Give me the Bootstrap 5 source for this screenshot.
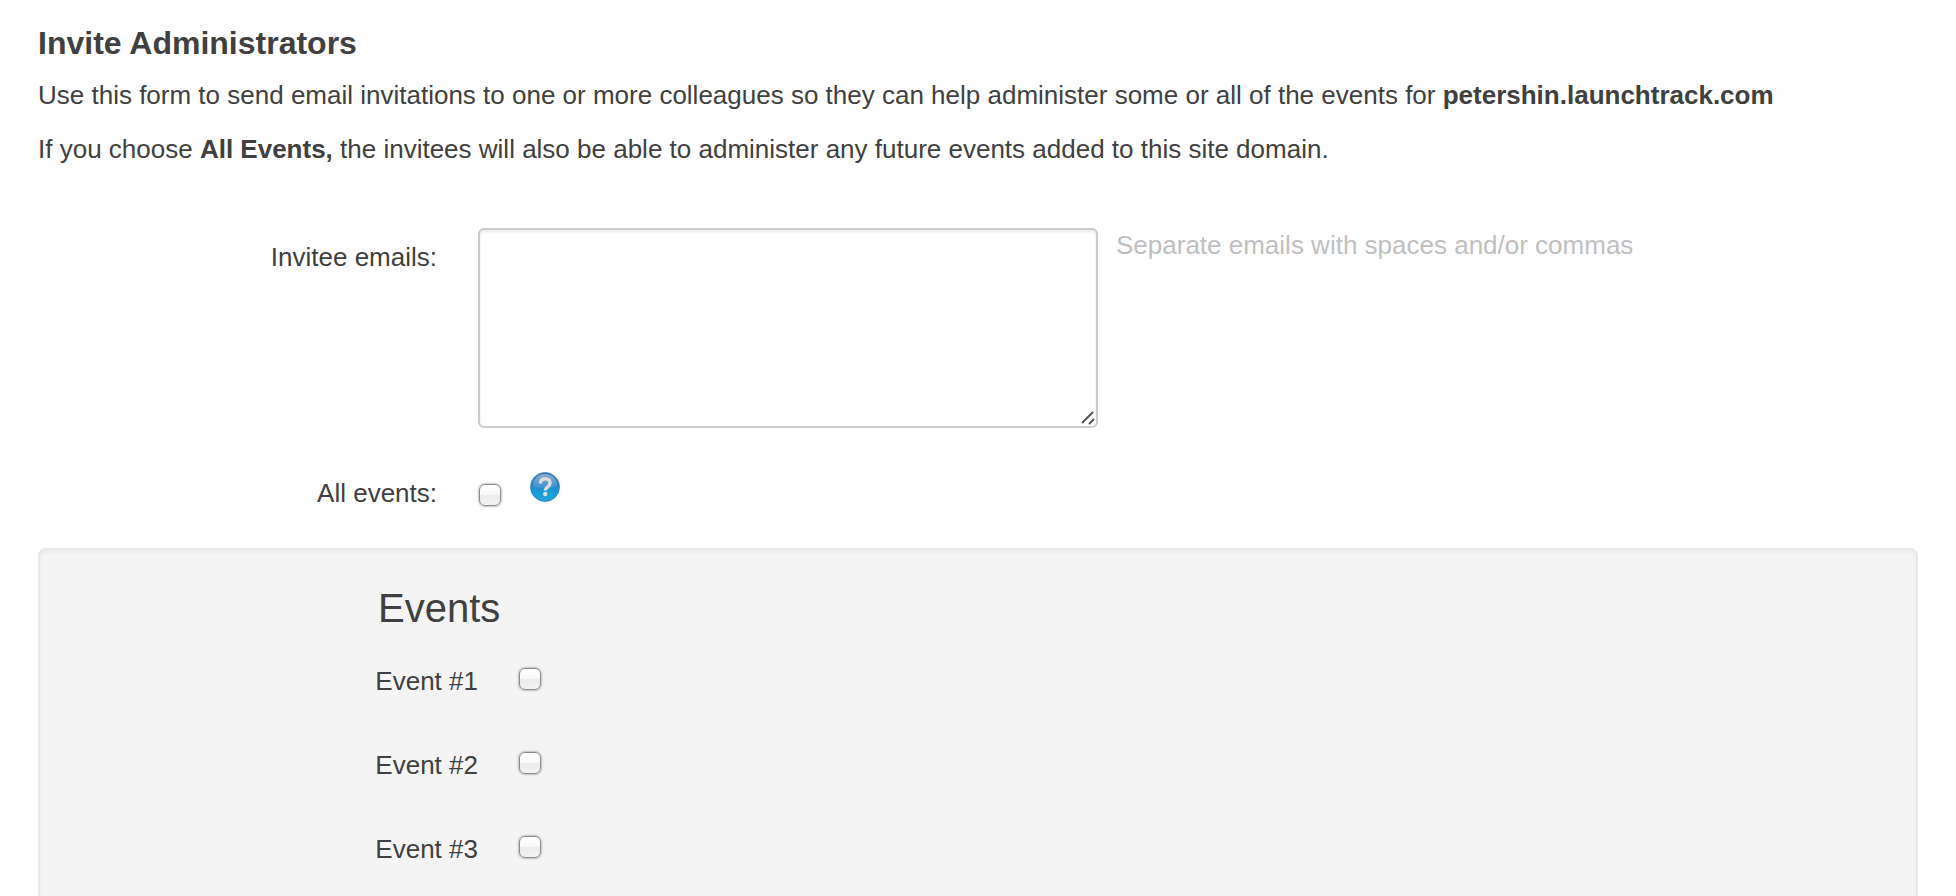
<!DOCTYPE html>
<html lang="en">
<head>
<meta charset="utf-8">
<meta name="viewport" content="width=device-width, initial-scale=1">
<title>Invite Administrators</title>
<link href="https://cdn.jsdelivr.net/npm/bootstrap@5.3.0/dist/css/bootstrap.min.css" rel="stylesheet">
<style>
  body { font-family: "Liberation Sans", Arial, sans-serif; font-size: 26px; line-height: 36px; color: #404040; background: #fff; }
  .page { padding: 23px 38px 0; }
  .page-title { font-size: 32px; line-height: 40px; font-weight: 700; margin-bottom: 14px; }
  .intro { margin-bottom: 18px; }
  .line-label { flex: 0 0 399px; text-align: right; margin-right: 41px; }
  .emails-line { margin-top: 61px; }
  .emails-line .line-label { padding-top: 11px; }
  .emails-box { flex: 0 1 620px; height: 200px; border: 2px solid #ccc; border-radius: 6px; box-shadow: inset 0 2px 3px rgba(0,0,0,.08); resize: both; }
  .emails-box::-webkit-resizer { background: url("data:image/svg+xml,%3Csvg xmlns='http://www.w3.org/2000/svg' width='15' height='15' viewBox='0 0 15 15'%3E%3Cpath d='M1 12L12 1M8 13l5-5' fill='none' stroke='%23555' stroke-width='2'/%3E%3C/svg%3E") no-repeat right bottom; }
  .emails-hint { color: #bfbfbf; margin-left: 18px; line-height: 34px; }
  .all-line { margin-top: 44px; }
  .all-line .line-label { padding: 3px 0 1px; }
  .glossy-check { appearance: none; flex: none; width: 22px; height: 22px; margin: 0; border: 1px solid #8c8c8c; border-radius: 6px; background: linear-gradient(#fff 0%, #f8f8f8 48%, #ececec 52%, #f3f3f3 100%); box-shadow: 0 0 2px 1px rgba(0,0,0,.22); }
  .glossy-check:checked { background: #4a90d9; }
  .all-line .glossy-check { margin: 12px 29px 0 1px; }
  .help-btn { padding: 0; border: 0; background: none; width: 30px; height: 30px; line-height: 0; }
  .events-panel { margin-top: 36px; padding: 38px 36px; background: #f4f4f4; border: 2px solid #e8e8e8; border-radius: 8px; box-shadow: inset 0 2px 4px rgba(0,0,0,.05); }
  .events-title { font-size: 40px; line-height: 40px; font-weight: 400; margin: 0 0 35px 302px; }
  .event-line { margin-bottom: 48px; }
  .event-line .line-label { flex-basis: 402px; }
  .event-line .glossy-check { margin-top: 5px; }
</style>
</head>
<body>
<main class="page">
  <h1 class="page-title">Invite Administrators</h1>
  <p class="intro">Use this form to send email invitations to one or more colleagues so they can help administer some or all of the events for <strong>petershin.launchtrack.com</strong></p>
  <p class="intro">If you choose <strong>All Events,</strong> the invitees will also be able to administer any future events added to this site domain.</p>
  <form>
    <div class="d-flex align-items-start emails-line">
      <label class="line-label" for="emails">Invitee emails:</label>
      <textarea class="emails-box" id="emails" aria-describedby="emails-hint"></textarea>
      <p class="emails-hint mb-0" id="emails-hint">Separate emails with spaces and/or commas</p>
    </div>
    <div class="d-flex align-items-start all-line">
      <label class="line-label" for="all-events">All events:</label>
      <input class="glossy-check" type="checkbox" id="all-events">
      <button class="help-btn" type="button" aria-label="Help">
        <svg width="30" height="30" viewBox="0 0 30 30" aria-hidden="true">
          <defs>
            <linearGradient id="ball" x1="0" y1="0" x2="0" y2="1">
              <stop offset="0" stop-color="#3a6fb4"/><stop offset=".45" stop-color="#2488cb"/><stop offset=".75" stop-color="#12a3de"/><stop offset="1" stop-color="#2a9fd0"/>
            </linearGradient>
            <linearGradient id="shine" x1="0" y1="0" x2="0" y2="1">
              <stop offset="0" stop-color="#fff" stop-opacity=".4"/><stop offset="1" stop-color="#fff" stop-opacity=".08"/>
            </linearGradient>
          </defs>
          <circle cx="15" cy="15" r="14.500" fill="url(#ball)" stroke="#2c78b8" stroke-opacity=".7"/>
          <path d="M3 14C3 6 8 2 15 2s12 4 12 12c-6 3-18 3-24 0z" fill="url(#shine)"/>
          <path d="M10.500 11.500c0-3.200 2-4.800 4.700-4.800s4.900 1.700 4.900 4.400c0 3.800-4.800 3.600-4.800 7.400" fill="none" stroke="#dfdcd6" stroke-width="3.400"/>
          <circle cx="15.200" cy="22" r="2.200" fill="#dfdcd6"/>
        </svg>
      </button>
    </div>
    <fieldset class="events-panel">
      <h2 class="events-title">Events</h2>
      <div class="d-flex align-items-start event-line"><label class="line-label" for="event-1">Event #1</label><input class="glossy-check" type="checkbox" id="event-1"></div>
      <div class="d-flex align-items-start event-line"><label class="line-label" for="event-2">Event #2</label><input class="glossy-check" type="checkbox" id="event-2"></div>
      <div class="d-flex align-items-start event-line"><label class="line-label" for="event-3">Event #3</label><input class="glossy-check" type="checkbox" id="event-3"></div>
    </fieldset>
  </form>
</main>
<script src="https://cdn.jsdelivr.net/npm/bootstrap@5.3.0/dist/js/bootstrap.bundle.min.js"></script>
</body>
</html>
